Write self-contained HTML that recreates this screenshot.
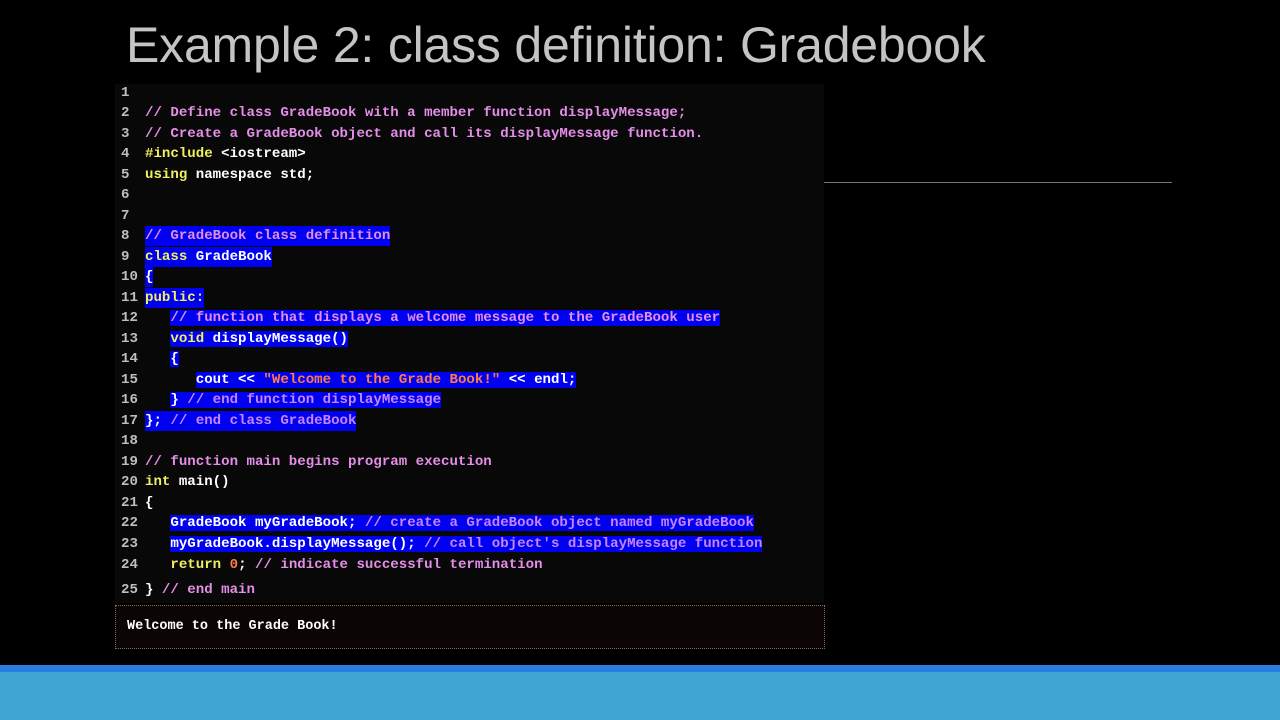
<!DOCTYPE html>
<html><head><meta charset="utf-8"><style>
body{margin:0;width:1280px;height:720px;background:#000;overflow:hidden;position:relative;font-family:"Liberation Sans",sans-serif}
.t{position:absolute;left:126px;top:16px;font-size:50px;color:#c4c4c4;letter-spacing:-0.2px;white-space:nowrap}
.panel{position:absolute;left:115px;top:84px;width:709px;height:519px;background:#080808}
.l{position:absolute;left:0;height:20px;line-height:20px;font-family:"Liberation Mono",monospace;font-weight:bold;font-size:14.1px;white-space:pre;color:#fff}
.n{position:absolute;left:6px;width:20px;color:#bfbfbf}
.c{position:absolute;left:30px}
.cm{color:#e58ee8}.k{color:#f0f060}.s{color:#ff7a48}
.h{background:#0000f0}.h .cm{color:#c884ff}
.out{position:absolute;left:115px;top:605px;width:708px;height:42px;border:1px dotted #8a6a50;background:#0c0506}
.out span{position:absolute;left:11px;top:13px;font-family:"Liberation Mono",monospace;font-weight:bold;font-size:13.5px;color:#fff}
</style></head><body>
<div class="t">Example 2: class definition: Gradebook</div>
<div style="position:absolute;left:824px;top:182px;width:348px;height:1px;background:#777"></div>
<div class="panel">
<div class="l" style="top:-1px"><span class="n">1</span></div>
<div class="l" style="top:19px"><span class="n">2</span><span class="c cm">// Define class GradeBook with a member function displayMessage;</span></div>
<div class="l" style="top:40px"><span class="n">3</span><span class="c cm">// Create a GradeBook object and call its displayMessage function.</span></div>
<div class="l" style="top:60px"><span class="n">4</span><span class="c"><span class="k">#include</span> &lt;iostream&gt;</span></div>
<div class="l" style="top:81px"><span class="n">5</span><span class="c"><span class="k">using</span> namespace std;</span></div>
<div class="l" style="top:101px"><span class="n">6</span></div>
<div class="l" style="top:122px"><span class="n">7</span></div>
<div class="l" style="top:142px"><span class="n">8</span><span class="c h cm">// GradeBook class definition</span></div>
<div class="l" style="top:163px"><span class="n">9</span><span class="c h"><span class="k">class</span> GradeBook</span></div>
<div class="l" style="top:183px"><span class="n">10</span><span class="c h">{</span></div>
<div class="l" style="top:204px"><span class="n">11</span><span class="c h"><span class="k">public:</span></span></div>
<div class="l" style="top:224px"><span class="n">12</span><span class="c">   <span class="h cm">// function that displays a welcome message to the GradeBook user</span></span></div>
<div class="l" style="top:245px"><span class="n">13</span><span class="c">   <span class="h"><span class="k">void</span> displayMessage()</span></span></div>
<div class="l" style="top:265px"><span class="n">14</span><span class="c">   <span class="h">{</span></span></div>
<div class="l" style="top:286px"><span class="n">15</span><span class="c">      <span class="h">cout &lt;&lt; <span class="s">"Welcome to the Grade Book!"</span> &lt;&lt; endl;</span></span></div>
<div class="l" style="top:306px"><span class="n">16</span><span class="c">   <span class="h">} <span class="cm">// end function displayMessage</span></span></span></div>
<div class="l" style="top:327px"><span class="n">17</span><span class="c h">}; <span class="cm">// end class GradeBook</span></span></div>
<div class="l" style="top:347px"><span class="n">18</span></div>
<div class="l" style="top:368px"><span class="n">19</span><span class="c cm">// function main begins program execution</span></div>
<div class="l" style="top:388px"><span class="n">20</span><span class="c"><span class="k">int</span> main()</span></div>
<div class="l" style="top:409px"><span class="n">21</span><span class="c">{</span></div>
<div class="l" style="top:429px"><span class="n">22</span><span class="c">   <span class="h">GradeBook myGradeBook; <span class="cm">// create a GradeBook object named myGradeBook</span></span></span></div>
<div class="l" style="top:450px"><span class="n">23</span><span class="c">   <span class="h">myGradeBook.displayMessage(); <span class="cm">// call object's displayMessage function</span></span></span></div>
<div class="l" style="top:471px"><span class="n">24</span><span class="c">   <span class="k">return</span> <span class="s">0</span>; <span class="cm">// indicate successful termination</span></span></div>
<div class="l" style="top:496px"><span class="n">25</span><span class="c">} <span class="cm">// end main</span></span></div>
</div>
<div class="out"><span>Welcome to the Grade Book!</span></div>
<div style="position:absolute;left:0;top:665px;width:1280px;height:7px;background:#2a7de1"></div>
<div style="position:absolute;left:0;top:672px;width:1280px;height:48px;background:#41a5d3"></div>
</body></html>
